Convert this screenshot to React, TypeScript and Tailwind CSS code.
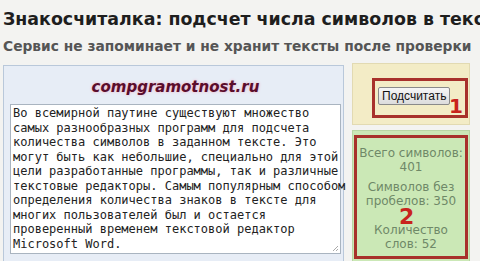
import React from 'react';

const lines = [
  'Во всемирной паутине существуют множество',
  'самых разнообразных программ для подсчета',
  'количества символов в заданном тексте. Это',
  'могут быть как небольшие, специально для этой',
  'цели разработанные программы, так и различные',
  'текстовые редакторы. Самым популярным способом',
  'определения количества знаков в тексте для',
  'многих пользователей был и остается',
  'проверенный временем текстовой редактор',
  'Microsoft Word.',
];

export default function App() {
  return (
    <main className="w-[480px] h-[261px] overflow-hidden bg-[#f3f3f1] font-['DejaVu_Sans',sans-serif]">
      {/* Header */}
      <h1 className="pl-[3px] pt-[8px] h-[36px] overflow-hidden whitespace-nowrap text-[17.4px] leading-[22px] font-bold text-[#1e1e1e]">
        Знакосчиталка: подсчет числа символов в тексте
      </h1>
      <p className="pl-[3px] h-[22px] whitespace-nowrap text-[13.8px] leading-[20px] font-bold text-[#555]">
        Сервис не запоминает и не хранит тексты после проверки
      </p>

      <div className="flex items-start">
        {/* Text panel */}
        <section className="ml-[3px] mt-[7px] w-[341px] h-[200px] bg-[#e7edf6] border border-[#b9c8da] pl-[6px] pr-[2px]">
          <div className="h-[38px] pt-[12px] text-center text-[15px] leading-[18px] font-bold italic text-[#5a0d2c] [text-shadow:0_0_3px_#f0a8c0]">
            compgramotnost.ru
          </div>
          <div className="relative h-[150px] bg-white border border-[#a9b4c0] pl-[2px] pt-[1px] font-['DejaVu_Sans_Mono',monospace] text-[12px] leading-[14.5px] text-[#222]">
            {lines.map((line, i) => (
              <div key={i} className="whitespace-pre">
                {line}
              </div>
            ))}
            <svg className="absolute right-[1px] bottom-[1px]" width="8" height="8" viewBox="0 0 8 8">
              <path d="M7 2 L2 7 M7 5 L5 7" stroke="#aaa" strokeWidth="1" />
            </svg>
          </div>
        </section>

        {/* Right column */}
        <aside className="ml-[8px] mt-[5px] w-[118px] flex flex-col gap-[5px]">
          <div className="h-[62px] bg-[#f3ecc6] border border-[#e2dab2] pt-[14px] pl-[19px] pr-[1px]">
            <div className="relative h-[40px] border-[3px] border-[#a8312b] pl-[3px] pt-[2px]">
              <button className="h-[18px] px-[3px] rounded-[2px] border border-[#8a8a8a] bg-gradient-to-b from-[#f6f6f6] to-[#dcdcdc] font-['Liberation_Sans',sans-serif] text-[12px] leading-[14px] text-[#111]">
                Подсчитать
              </button>
              <span className="absolute right-[2px] top-[15px] text-[20px] leading-[20px] font-bold text-[#c8231d]">
                1
              </span>
            </div>
          </div>

          <div className="h-[140px] bg-[#cbe8b6] border border-[#b9d6a4] pt-[4px] px-[1px]">
            <div className="relative h-[124px] border-[3px] border-[#a8312b] pt-[8px] text-center text-[12px] leading-[14px] text-[#6f8868]">
              <p>
                Всего символов:
                <br />
                401
              </p>
              <p className="mt-[6px]">
                Символов без
                <br />
                пробелов: 350
              </p>
              <span className="absolute left-[42px] top-[68px] text-[22px] leading-[22px] font-bold text-[#c8231d]">
                2
              </span>
              <p className="mt-[15px]">
                Количество
                <br />
                слов: 52
              </p>
            </div>
          </div>
        </aside>
      </div>
    </main>
  );
}
